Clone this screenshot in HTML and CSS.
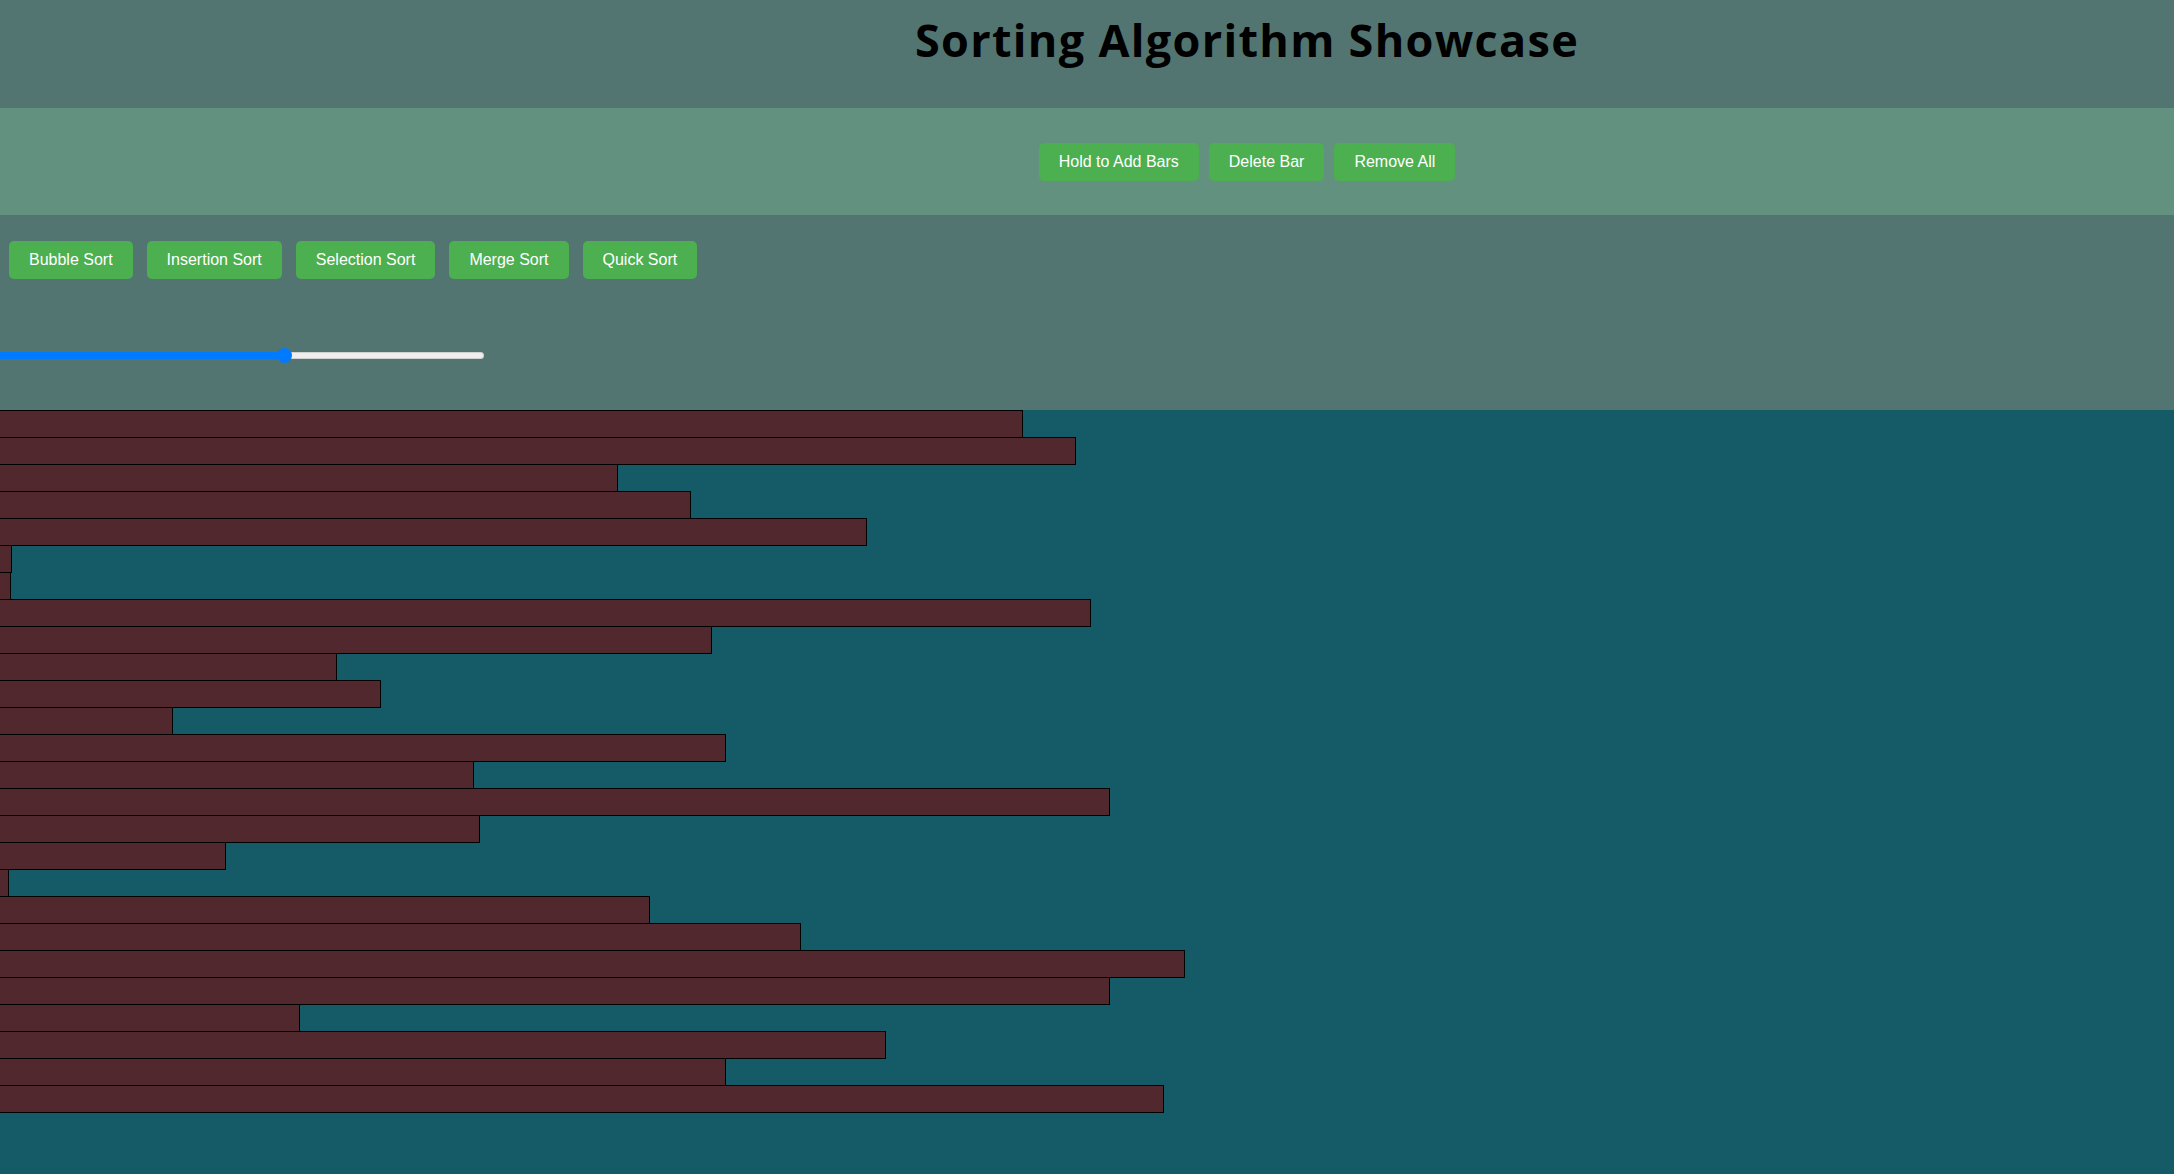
FILE: index.html
```html
<!DOCTYPE html>
<html lang="en">
<head>
<meta charset="utf-8">
<title>Sorting Algorithm Showcase</title>
<link rel="stylesheet" href="styles.css">
</head>
<body>
<header class="site-header">
  <h1 class="title">Sorting Algorithm Showcase</h1>
</header>
<section class="bar-controls">
  <button class="btn">Hold to Add Bars</button>
  <button class="btn">Delete Bar</button>
  <button class="btn">Remove All</button>
</section>
<section class="algo-panel">
  <div class="algo-buttons">
    <button class="btn">Bubble Sort</button>
    <button class="btn">Insertion Sort</button>
    <button class="btn">Selection Sort</button>
    <button class="btn">Merge Sort</button>
    <button class="btn">Quick Sort</button>
  </div>
  <div class="speed-row">
    <div class="speed" role="slider" aria-label="Speed" aria-valuemin="0" aria-valuemax="100" aria-valuenow="60">
      <div class="speed-fill" style="width:60%"></div>
      <div class="speed-thumb" style="left:60%"></div>
    </div>
  </div>
</section>
<main class="bars">
  <div class="bar" style="width:1023.5px"></div>
  <div class="bar" style="width:1077px"></div>
  <div class="bar" style="width:619px"></div>
  <div class="bar" style="width:692px"></div>
  <div class="bar" style="width:868px"></div>
  <div class="bar" style="width:12.7px"></div>
  <div class="bar" style="width:11.7px"></div>
  <div class="bar" style="width:1092px"></div>
  <div class="bar" style="width:713px"></div>
  <div class="bar" style="width:337.7px"></div>
  <div class="bar" style="width:381.7px"></div>
  <div class="bar" style="width:173.7px"></div>
  <div class="bar" style="width:726.5px"></div>
  <div class="bar" style="width:474.7px"></div>
  <div class="bar" style="width:1111px"></div>
  <div class="bar" style="width:480.7px"></div>
  <div class="bar" style="width:226.7px"></div>
  <div class="bar" style="width:9.7px"></div>
  <div class="bar" style="width:651px"></div>
  <div class="bar" style="width:801.5px"></div>
  <div class="bar" style="width:1186px"></div>
  <div class="bar" style="width:1111px"></div>
  <div class="bar" style="width:301px"></div>
  <div class="bar" style="width:886.5px"></div>
  <div class="bar" style="width:727px"></div>
  <div class="bar" style="width:1165px"></div>
</main>
</body>
</html>
```
FILE: styles.css
```css
* {
  box-sizing: border-box;
}

html, body {
  margin: 0;
  padding: 0;
}

body {
  background: #155b67;
  min-height: 100vh;
  overflow: hidden;
  font-family: "Liberation Sans", Arial, sans-serif;
}

.site-header {
  height: 108px;
  background: #537572;
  padding: 9px 0 0 320px;
}

.title {
  margin: 0;
  text-align: center;
  font-family: "Open Sans", "Noto Sans", sans-serif;
  font-weight: 700;
  font-size: 45px;
  letter-spacing: 1.3px;
  line-height: normal;
  color: #000;
}

.bar-controls {
  height: 107px;
  background: #63917f;
  padding-left: 320px;
  display: flex;
  justify-content: center;
  align-items: center;
  gap: 10px;
}

.btn {
  font-family: "Liberation Sans", Arial, sans-serif;
  font-size: 16px;
  line-height: 18px;
  padding: 10px 20px;
  border: none;
  border-radius: 5px;
  background: #4caf50;
  color: #fff;
  cursor: pointer;
}

.algo-panel {
  height: 195px;
  background: #537572;
  padding-top: 26px;
}

.algo-buttons {
  display: flex;
  gap: 14px;
  padding-left: 9px;
}

.speed-row {
  margin-top: 69px;
  margin-left: -16px;
  height: 15px;
  display: flex;
  align-items: center;
}

.speed {
  position: relative;
  width: 500px;
  height: 7px;
  border-radius: 4px;
  background: #eeeeee;
  box-shadow: inset 0 0 0 1px rgba(0, 0, 0, 0.12);
}

.speed-fill {
  height: 100%;
  border-radius: 4px 0 0 4px;
  background: #007bff;
}

.speed-thumb {
  position: absolute;
  top: 50%;
  width: 15px;
  height: 15px;
  margin: -7.5px 0 0 -7.5px;
  border-radius: 50%;
  background: #007bff;
}

.bars {
  margin-left: -1px;
}

.bar {
  height: 28px;
  margin-bottom: -1px;
  background: #52282f;
  border: 1px solid #000;
}
```
